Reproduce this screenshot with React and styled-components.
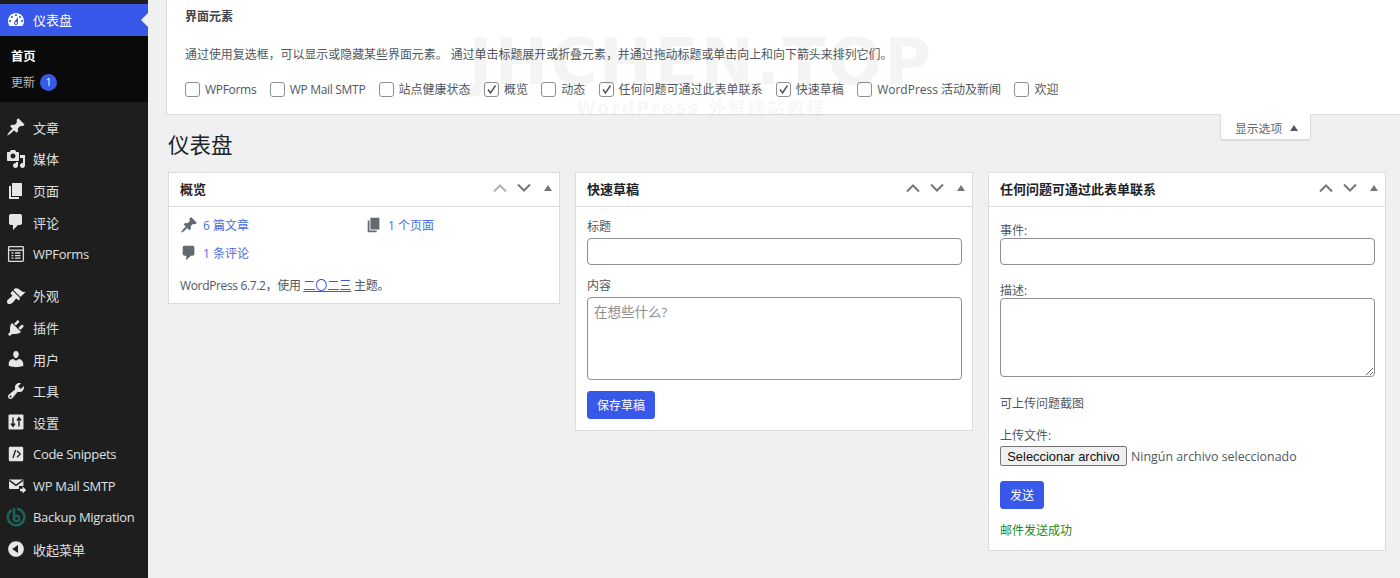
import React from 'react';
import styled, { createGlobalStyle } from 'styled-components';

const FONT = `"Open Sans", "Noto Sans CJK SC", "Noto Sans", sans-serif`;

const Global = createGlobalStyle`
  html, body { margin: 0; padding: 0; height: 100%; overflow: hidden; background: #f0f0f1; }
  body { font-family: ${FONT}; font-size: 12px; color: #50575e; }
  #root { height: 100%; }
  * { box-sizing: border-box; }
`;

const P = {
  dashboard: 'M3.76 16h12.48c1.1-1.37 1.76-3.11 1.76-5 0-4.42-3.58-8-8-8s-8 3.58-8 8c0 1.89.66 3.63 1.76 5zM10 4c.55 0 1 .45 1 1s-.45 1-1 1-1-.45-1-1 .45-1 1-1zM6 6c.55 0 1 .45 1 1s-.45 1-1 1-1-.45-1-1 .45-1 1-1zm8 0c.55 0 1 .45 1 1s-.45 1-1 1-1-.45-1-1 .45-1 1-1zm-5.37 5.55L12 7v6c0 1.1-.9 2-2 2s-2-.9-2-2c0-.57.24-1.08.63-1.45zM4 10c.55 0 1 .45 1 1s-.45 1-1 1-1-.45-1-1 .45-1 1-1zm12 0c.55 0 1 .45 1 1s-.45 1-1 1-1-.45-1-1 .45-1 1-1zm-5 3c0-.55-.45-1-1-1s-1 .45-1 1 .45 1 1 1 1-.45 1-1z',
  post: 'M10.44 3.02l1.82-1.82 6.36 6.35-1.83 1.82c-1.05-.68-2.48-.57-3.41.36l-.75.75c-.92.93-1.04 2.35-.35 3.41l-1.83 1.82-2.41-2.41-2.8 2.79c-.42.42-3.38 2.71-3.8 2.29s1.86-3.39 2.28-3.81l2.79-2.79L4.1 9.36l1.83-1.82c1.05.69 2.48.57 3.4-.36l.75-.75c.93-.92 1.05-2.35.36-3.41z',
  media: 'M13 11V4c0-.55-.45-1-1-1h-1.67L9 1H5L3.67 3H2c-.55 0-1 .45-1 1v7c0 .55.45 1 1 1h10c.55 0 1-.45 1-1zM7 4.5c1.38 0 2.5 1.12 2.5 2.5S8.38 9.5 7 9.5 4.5 8.38 4.5 7 5.62 4.5 7 4.5zM14 6h5v10.5c0 1.38-1.12 2.5-2.5 2.5S14 17.88 14 16.5s1.12-2.5 2.5-2.5c.17 0 .34.02.5.05V9h-3V6zm-4 8.05V13h2v3.5c0 1.38-1.12 2.5-2.5 2.5S7 17.88 7 16.5 8.12 14 9.5 14c.17 0 .34.02.5.05z',
  page: 'M6 15V2h10v13H6zm-1 1h8v2H3V5h2v11z',
  comment: 'M5 2h9c1.1 0 2 .9 2 2v7c0 1.1-.9 2-2 2h-2l-5 5v-5H5c-1.1 0-2-.9-2-2V4c0-1.1.9-2 2-2z',
  appearance: 'M14.48 11.06L7.41 3.99l1.5-1.5c.5-.56 2.3-.47 3.51.32 1.21.8 1.43 1.28 2.91 2.1 1.18.64 2.45 1.26 4.45.85zm-.71.71L6.7 4.7 4.93 6.47c-.39.39-.39 1.02 0 1.41l1.06 1.06c.39.39.39 1.03 0 1.42-.6.6-1.43 1.11-2.21 1.69-.35.26-.7.53-1.01.84C1.43 13.23.99 14.95 1 15.9c0 1.12 1 2.1 2.1 2.1.94.01 2.67-.43 4.01-1.77.31-.31.58-.66.84-1.01.58-.78 1.09-1.61 1.69-2.21.39-.39 1.03-.39 1.42 0l1.06 1.06c.39.39 1.02.39 1.41 0z',
  plugins: 'M13.11 4.36L9.87 7.6 8 5.73l3.24-3.24c.35-.34 1.05-.2 1.56.32.52.51.66 1.21.31 1.55zm-8 1.77l.91-1.12 9.01 9.01-1.19.84c-.71.71-2.63 1.16-3.82 1.16H6.14L4.9 17.26c-.59.59-1.54.59-2.12 0-.59-.58-.59-1.53 0-2.12l1.24-1.24v-3.88c0-1.13.4-3.19 1.09-3.89zm7.26 3.97l3.24-3.24c.34-.35 1.04-.21 1.55.31.52.51.66 1.21.31 1.55l-3.24 3.25z',
  users: 'M10 9.25c-2.27 0-2.73-3.44-2.73-3.44C7 4.02 7.82 2 9.97 2c2.16 0 2.98 2.02 2.71 3.81 0 0-.41 3.44-2.68 3.44zm0 2.57L12.72 10c2.39 0 4.52 2.33 4.52 4.53v2.49s-3.65 1.13-7.24 1.13c-3.65 0-7.24-1.13-7.24-1.13v-2.49c0-2.25 1.94-4.48 4.47-4.48z',
  tools: 'M16.68 9.77c-1.34 1.34-3.3 1.67-4.95.99l-5.41 6.52c-.99.99-2.59.99-3.58 0s-.99-2.59 0-3.57l6.52-5.42c-.68-1.65-.35-3.61.99-4.95 1.28-1.28 3.12-1.62 4.72-1.06l-2.89 2.89 2.82 2.82 2.86-2.87c.53 1.58.18 3.39-1.08 4.65zM3.81 16.21c.4.39 1.04.39 1.43 0 .4-.4.4-1.04 0-1.43-.39-.4-1.03-.4-1.43 0-.39.39-.39 1.03 0 1.43z',
  collapse: 'M10 2.16c4.33 0 7.84 3.51 7.84 7.84s-3.51 7.84-7.84 7.84S2.16 14.33 2.16 10 5.71 2.16 10 2.16zm2 11.72V6.12L6.18 9.97z',
};

const Dash = ({ name, size = 20, color = 'currentColor' }) => (
  <svg width={size} height={size} viewBox="0 0 20 20" fill={color}><path d={P[name]} /></svg>
);

const SettingsIcon = () => (
  <svg width="20" height="20" viewBox="0 0 20 20">
    <rect x="2.5" y="2.5" width="15" height="15" rx="1" fill="#e4e6e8" />
    <path d="M7 5.5v8.5M5 11.5l2 2.8 2-2.8M13 14.5V6M11 8.5l2-2.8 2 2.8" stroke="#1e1e1e" strokeWidth="1.4" fill="none" />
  </svg>
);
const SnippetIcon = () => (
  <svg width="20" height="20" viewBox="0 0 20 20">
    <rect x="2.8" y="2.8" width="14.4" height="14.4" rx="1.2" fill="#e4e6e8" />
    <path d="M7 14l2.6-8M11 6.8 14.2 10 11 13.2" stroke="#1e1e1e" strokeWidth="1.3" fill="none" />
  </svg>
);
const SmtpIcon = () => (
  <svg width="20" height="20" viewBox="0 0 20 20">
    <path d="M3 3.5h13.6a.8.8 0 0 1 .8.8V10h-4.4v3H3.8a.8.8 0 0 1-.8-.8z" fill="#e4e6e8" />
    <path d="M3.4 4.4 10 9.4l6.8-5" stroke="#1e1e1e" strokeWidth="1.4" fill="none" />
    <path d="M14 12.8h2.6V10.4l3.6 3.6-3.6 3.6v-2.4H14z" fill="#e4e6e8" />
  </svg>
);
const BackupIcon = () => (
  <svg width="20" height="20" viewBox="0 0 20 20">
    <path d="M5.6 3.2A8.2 8.2 0 1 0 11 1.9" fill="none" stroke="#1b6359" strokeWidth="2.6" />
    <path d="M8 1v12" stroke="#1b6359" strokeWidth="2.6" />
    <circle cx="10.6" cy="11.4" r="2.7" fill="none" stroke="#1b6359" strokeWidth="2.3" />
  </svg>
);
const FormsIcon = () => (
  <svg width="20" height="20" viewBox="0 0 20 20" fill="none" stroke="#dcdee0">
    <rect x="2.6" y="2.6" width="14.8" height="14.8" strokeWidth="1.3" rx=".8" />
    <path d="M3 6.2h14" strokeWidth="1.3" />
    <path d="M5.5 9h2M9 9h5.5M5.5 11.6h2M9 11.6h5.5M5.5 14.2h2M9 14.2h5.5" strokeWidth="1.3" />
  </svg>
);

const Page = styled.div`
  position: relative;
  display: flex;
  height: 100%;
  overflow: hidden;
`;

const Sidebar = styled.nav`
  flex: 0 0 148px;
  background: #1e1e1e;
  padding-top: 4px;
  color: #e6e7e8;
`;

const ActiveItem = styled.div`
  position: relative;
  display: flex;
  align-items: center;
  height: 32px;
  padding: 0 0 1px 6px;
  background: #3858e9;
  color: #fff;
  font-size: 13px;
  &::after {
    content: '';
    position: absolute;
    right: 0;
    top: 9px;
    border: 7px solid transparent;
    border-right-color: #f0f0f1;
    border-left-width: 0;
  }
`;

const Submenu = styled.div`
  background: #0a0a0a;
  height: 66px;
  padding: 13px 0 0 11px;
  margin-bottom: 9.5px;
`;

const SubCurrent = styled.div`
  height: 16px;
  line-height: 16px;
  font-size: 12.3px;
  font-weight: 700;
  color: #fff;
`;

const SubLink = styled.div`
  display: flex;
  align-items: center;
  gap: 5px;
  height: 18px;
  margin-top: 8px;
  font-size: 12px;
  color: #b4b9be;
`;

const Badge = styled.span`
  width: 17px;
  height: 17px;
  border-radius: 50%;
  background: #3858e9;
  color: #fff;
  font-size: 10px;
  line-height: 17px;
  text-align: center;
`;

const MenuGroup = styled.div`
  margin-bottom: ${(p) => p.$gap || 0}px;
`;

const MenuItem = styled.div`
  display: flex;
  align-items: center;
  height: 31.65px;
  padding-left: 6px;
  font-size: 13px;
  letter-spacing: ${(p) => (p.$latin ? '-0.3px' : '0')};
  white-space: nowrap;
  color: #dfe0e1;
`;

const IconSlot = styled.span`
  display: flex;
  align-items: center;
  justify-content: center;
  width: 20px;
  height: 20px;
  margin-right: 7px;
  color: ${(p) => p.$color || '#e4e6e8'};
`;

const Content = styled.main`
  flex: 1;
  min-width: 0;
  padding-left: 18px;
`;

const OptionsPanel = styled.section`
  position: relative;
  height: 115px;
  background: #fff;
  border-left: 1px solid #dcdcde;
  border-bottom: 1px solid #dcdcde;
  padding: 9px 0 0 18px;
`;

const PanelTitle = styled.div`
  font-size: 12px;
  line-height: 16px;
  font-weight: 700;
  color: #3c434a;
`;

const PanelText = styled.p`
  margin: 22px 0 0;
  line-height: 16px;
  font-size: 11.95px;
  color: #50575e;
`;

const CheckRow = styled.div`
  display: flex;
  align-items: center;
  height: 18px;
  margin-top: 17px;
`;

const CheckLabel = styled.label`
  display: flex;
  align-items: center;
  gap: 5px;
  margin-right: 13.3px;
  white-space: nowrap;
  font-size: 12px;
  letter-spacing: ${(p) => (p.$latin ? '-0.3px' : '0')};
  color: #50575e;
`;

const CheckBox = styled.span`
  display: flex;
  align-items: center;
  justify-content: center;
  width: 15px;
  height: 15px;
  border: 1px solid #8c8f94;
  border-radius: 3px;
  background: #fff;
`;

const OptionsTab = styled.button`
  position: absolute;
  top: 100%;
  right: 89px;
  display: flex;
  align-items: center;
  gap: 8px;
  width: 91px;
  height: 26px;
  margin: 0;
  padding: 2px 0 0 14px;
  border: 1px solid #dcdcde;
  border-top: none;
  border-radius: 0 0 3px 3px;
  background: #fff;
  box-shadow: 0 1px 1px rgba(0, 0, 0, 0.08);
  font: 11.8px ${FONT};
  color: #646970;
  z-index: 1;
`;

const TriUp = styled.i`
  display: block;
  width: 0;
  height: 0;
  border-left: 4px solid transparent;
  border-right: 4px solid transparent;
  border-bottom: 6px solid #50575e;
`;

const Wrap = styled.div`
  padding: 0 14px 0 2px;
`;

const Heading = styled.h1`
  margin: 0;
  padding: 15px 0 12px;
  font-size: 21.5px;
  line-height: 30px;
  font-weight: 400;
  color: #1d2327;
`;

const Columns = styled.div`
  display: grid;
  grid-template-columns: 392px 398px 398px;
  column-gap: 15px;
  align-items: start;
`;

const Card = styled.article`
  background: #fff;
  border: 1px solid #dcdcde;
`;

const CardHead = styled.header`
  display: flex;
  align-items: center;
  justify-content: space-between;
  height: 34px;
  padding-left: 11px;
  border-bottom: 1px solid #dcdcde;
`;

const CardTitle = styled.h2`
  margin: 0 0 2px;
  font-size: 13px;
  line-height: 16px;
  font-weight: 700;
  color: #1d2327;
`;

const Controls = styled.div`
  display: flex;
  margin: 0 -1px 3px 0;
`;

const Control = styled.span`
  display: flex;
  align-items: center;
  justify-content: center;
  width: 24px;
  height: 24px;
`;

const Chevron = ({ up, color }) => (
  <svg width="16" height="10" viewBox="0 0 16 10" fill="none" stroke={color} strokeWidth="2">
    <path d={up ? 'M2 8.5 8 2.5l6 6' : 'M2 1.5l6 6 6-6'} />
  </svg>
);

const SmallTri = styled.i`
  display: block;
  width: 0;
  height: 0;
  border-left: 4.2px solid transparent;
  border-right: 4.2px solid transparent;
  border-bottom: 6px solid #72777c;
`;

const OverviewBody = styled.div`
  padding: 4px 11px 10px;
`;

const StatGrid = styled.div`
  display: grid;
  grid-template-columns: 185px 185px;
  grid-auto-rows: 28px;
`;

const Stat = styled.a`
  display: flex;
  align-items: center;
  gap: 5px;
  font-size: 12px;
  color: #4a6ce0;
`;

const StatIcon = styled.span`
  display: flex;
  width: 18px;
  color: #646970;
`;

const Footnote = styled.p`
  height: 16px;
  margin: 10px 0 0;
  line-height: 18px;
  font-size: 12px;
  letter-spacing: -0.35px;
  color: #50575e;
`;

const ThemeLink = styled.a`
  color: #3858e9;
  letter-spacing: 0;
  text-decoration: underline;
`;

const FormBody = styled.form`
  padding: ${(p) => p.$top}px 10px ${(p) => p.$bottom}px 11px;
`;

const FieldLabel = styled.label`
  display: block;
  height: 16px;
  line-height: 18px;
  margin-top: ${(p) => p.$mt || 0}px;
  margin-bottom: ${(p) => p.$mb || 0}px;
  font-size: 12px;
  color: #50575e;
`;

const TextInput = styled.input`
  display: block;
  width: 100%;
  height: 27px;
  border: 1px solid #8c8f94;
  border-radius: 4px;
  background: #fff;
  outline: none;
`;

const TextArea = styled.textarea`
  display: block;
  width: 100%;
  height: ${(p) => p.$h}px;
  padding: 5px 6px;
  border: 1px solid #8c8f94;
  border-radius: 4px;
  background: #fff;
  font: 13.5px/18px ${FONT};
  color: #2c3338;
  outline: none;
  resize: ${(p) => (p.$resize ? 'vertical' : 'none')};
  &::placeholder { color: #8a8d90; opacity: 1; }
`;

const PrimaryButton = styled.button`
  display: block;
  height: 28px;
  margin-top: ${(p) => p.$mt}px;
  padding: 0 9px;
  border: 1px solid #3858e9;
  border-radius: 3px;
  background: #3858e9;
  color: #fff;
  font: 12px ${FONT};
`;

const NoteLine = styled.div`
  height: 16px;
  line-height: 18px;
  margin-top: ${(p) => p.$mt}px;
  font-size: 12px;
  color: ${(p) => p.$color || '#50575e'};
`;

const FileRow = styled.div`
  display: flex;
  align-items: center;
  height: 20px;
  margin-top: 3px;
  font: 12.4px ${FONT};
  color: #50575e;
`;

const FileButton = styled.button`
  width: 127px;
  height: 20px;
  padding: 0;
  margin-right: 4px;
  border: 1px solid #767676;
  border-radius: 2px;
  background: #efefef;
  color: #111;
  font: 12.9px "Liberation Sans", Arial, sans-serif;
  white-space: nowrap;
`;

const Watermark = styled.div`
  position: absolute;
  left: 467px;
  top: 26px;
  width: 468px;
  pointer-events: none;
  text-align: center;
  z-index: 2;
`;

const MarkMain = styled.div`
  font: 700 64px/72px "DejaVu Sans", sans-serif;
  letter-spacing: 2px;
  color: rgba(0, 0, 0, 0.042);
  white-space: nowrap;
`;

const MarkSub = styled.div`
  font: 700 17.5px/20px "DejaVu Sans", "Noto Sans CJK SC", sans-serif;
  letter-spacing: 2px;
  color: rgba(0, 0, 0, 0.05);
  white-space: nowrap;
`;

const groupA = [
  ['文章', <Dash name="post" />],
  ['媒体', <Dash name="media" />],
  ['页面', <Dash name="page" />],
  ['评论', <Dash name="comment" />],
  ['WPForms', <FormsIcon />, true],
];
const groupB = [
  ['外观', <Dash name="appearance" />],
  ['插件', <Dash name="plugins" />],
  ['用户', <Dash name="users" />],
  ['工具', <Dash name="tools" />],
  ['设置', <SettingsIcon />],
  ['Code Snippets', <SnippetIcon />, true],
  ['WP Mail SMTP', <SmtpIcon />, true],
  ['Backup Migration', <BackupIcon />, true],
  ['收起菜单', <Dash name="collapse" />],
];

const options = [
  ['WPForms', false, true],
  ['WP Mail SMTP', false, true],
  ['站点健康状态', false],
  ['概览', true],
  ['动态', false],
  ['任何问题可通过此表单联系', true],
  ['快速草稿', true],
  ['WordPress 活动及新闻', false],
  ['欢迎', false],
];

const Head = ({ title, dim }) => (
  <CardHead>
    <CardTitle>{title}</CardTitle>
    <Controls>
      <Control><Chevron up color={dim ? '#b0b3b6' : '#72777c'} /></Control>
      <Control><Chevron color="#72777c" /></Control>
      <Control><SmallTri /></Control>
    </Controls>
  </CardHead>
);

export default function App() {
  return (
    <Page>
      <Global />
      <Sidebar>
        <ActiveItem>
          <IconSlot $color="#fff"><Dash name="dashboard" /></IconSlot>
          仪表盘
        </ActiveItem>
        <Submenu>
          <SubCurrent>首页</SubCurrent>
          <SubLink>更新 <Badge>1</Badge></SubLink>
        </Submenu>
        <MenuGroup $gap={10.4}>
          {groupA.map(([t, ic, latin]) => (
            <MenuItem key={t} $latin={latin}><IconSlot>{ic}</IconSlot>{t}</MenuItem>
          ))}
        </MenuGroup>
        <MenuGroup>
          {groupB.map(([t, ic, latin]) => (
            <MenuItem key={t} $latin={latin}><IconSlot>{ic}</IconSlot>{t}</MenuItem>
          ))}
        </MenuGroup>
      </Sidebar>
      <Content>
        <OptionsPanel>
          <PanelTitle>界面元素</PanelTitle>
          <PanelText>通过使用复选框，可以显示或隐藏某些界面元素。 通过单击标题展开或折叠元素，并通过拖动标题或单击向上和向下箭头来排列它们。</PanelText>
          <CheckRow>
            {options.map(([t, on, latin]) => (
              <CheckLabel key={t} $latin={latin}>
                <CheckBox>
                  {on && (
                    <svg width="11" height="11" viewBox="0 0 11 11" fill="none" stroke="#50575e" strokeWidth="1.5">
                      <path d="M2 5.5 4.5 9 9.5 1.5" />
                    </svg>
                  )}
                </CheckBox>
                {t}
              </CheckLabel>
            ))}
          </CheckRow>
          <OptionsTab type="button">显示选项 <TriUp /></OptionsTab>
        </OptionsPanel>
        <Wrap>
          <Heading>仪表盘</Heading>
          <Columns>
            <Card>
              <Head title="概览" dim />
              <OverviewBody>
                <StatGrid>
                  <Stat><StatIcon><Dash name="post" size={18} /></StatIcon>6 篇文章</Stat>
                  <Stat><StatIcon><Dash name="page" size={18} /></StatIcon>1 个页面</Stat>
                  <Stat><StatIcon><Dash name="comment" size={18} /></StatIcon>1 条评论</Stat>
                </StatGrid>
                <Footnote>WordPress 6.7.2，使用 <ThemeLink>二〇二三</ThemeLink> 主题。</Footnote>
              </OverviewBody>
            </Card>
            <Card>
              <Head title="快速草稿" />
              <FormBody $top={11} $bottom={11}>
                <FieldLabel $mb={4}>标题</FieldLabel>
                <TextInput />
                <FieldLabel $mt={12} $mb={4}>内容</FieldLabel>
                <TextArea $h={83} placeholder="在想些什么?" />
                <PrimaryButton type="button" $mt={11}>保存草稿</PrimaryButton>
              </FormBody>
            </Card>
            <Card>
              <Head title="任何问题可通过此表单联系" />
              <FormBody $top={15} $bottom={12}>
                <FieldLabel>事件:</FieldLabel>
                <TextInput />
                <FieldLabel $mt={17}>描述:</FieldLabel>
                <TextArea $h={79} $resize />
                <NoteLine $mt={18}>可上传问题截图</NoteLine>
                <NoteLine $mt={16}>上传文件:</NoteLine>
                <FileRow>
                  <FileButton type="button">Seleccionar archivo</FileButton>
                  Ningún archivo seleccionado
                </FileRow>
                <PrimaryButton type="button" $mt={15}>发送</PrimaryButton>
                <NoteLine $mt={13} $color="#1a8a1a">邮件发送成功</NoteLine>
              </FormBody>
            </Card>
          </Columns>
        </Wrap>
      </Content>
      <Watermark>
        <MarkMain>JHCHEN.TOP</MarkMain>
        <MarkSub>WordPress 外贸建站教程</MarkSub>
      </Watermark>
    </Page>
  );
}
